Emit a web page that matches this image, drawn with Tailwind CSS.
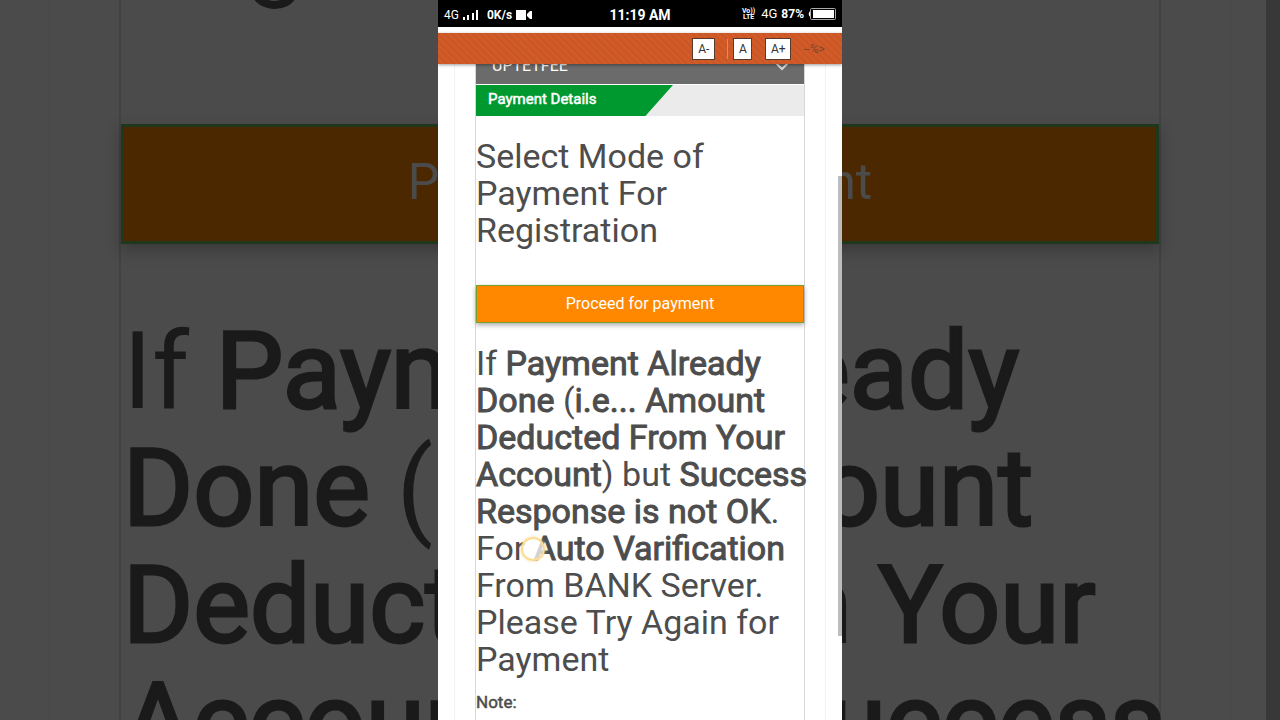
<!DOCTYPE html>
<html lang="en">
<head>
    <meta charset="UTF-8">
    <meta name="viewport" content="width=device-width, initial-scale=1.0">
    <title>Payment Details</title>
    <script src="https://cdn.jsdelivr.net/npm/@tailwindcss/browser@4"></script>
</head>
<body class="h-screen overflow-hidden bg-[#4b4b4b] font-[Roboto,sans-serif]">
    <div class="relative h-full overflow-hidden flex justify-center">

        <!-- Dimmed enlarged page behind the phone -->
        <div aria-hidden="true" class="absolute inset-0 overflow-hidden flex text-[#1a1a1a] text-[107px] leading-[117px]">
            <div class="w-12 shrink-0"></div>
            <div class="flex-1 min-w-0 border-x-2 border-[#494949] px-[69px] h-full">
                <div class="flow-root h-full border-x-2 border-[#424242] whitespace-nowrap">
                    <p class="-mt-[342px] pl-0.5">Select Mode of<br>Payment For<br>Registration</p>
                    <button tabindex="-1" class="mt-[115px] block w-full h-[120px] pb-1 border-[3px] border-[#1f381c] bg-[#4b2800] text-[#4b4b4b] text-[50px] leading-[50px] shadow-[0_6px_14px_rgba(0,0,0,0.25)]">Proceed for payment</button>
                    <p class="mt-[69px] pl-0.5">
                        If <span class="[-webkit-text-stroke:3px_#1a1a1a]">Payment Already</span><br>
                        <span class="[-webkit-text-stroke:3px_#1a1a1a]">Done</span> (<span class="[-webkit-text-stroke:3px_#1a1a1a]">i.e... Amount</span><br>
                        <span class="[-webkit-text-stroke:3px_#1a1a1a]">Deducted From Your</span><br>
                        <span class="[-webkit-text-stroke:3px_#1a1a1a]">Account</span>) but <span class="[-webkit-text-stroke:3px_#1a1a1a]">Success</span>
                    </p>
                </div>
            </div>
            <div class="w-[34px] shrink-0"></div>
            <div class="w-[14px] shrink-0 bg-[#383838]"></div>
        </div>

        <!-- Phone screen -->
        <div class="relative w-[404px] h-full overflow-hidden flex flex-col bg-white text-[#4d4d4d]">

            <!-- Status bar -->
            <header class="h-[27px] shrink-0 bg-black text-white grid grid-cols-3 items-center px-1.5 text-[13px] leading-4">
                <div class="flex items-center gap-1 pt-0.5">
                    <span class="text-xs">4G</span>
                    <svg class="w-4 h-3" viewBox="0 0 16 12" fill="#fff">
                        <rect x="0" y="8" width="2" height="3"/>
                        <rect x="4" y="6" width="2" height="5"/>
                        <rect x="9" y="4" width="2" height="7"/>
                        <rect x="13" y="1" width="2" height="10"/>
                    </svg>
                    <span class="pl-1 text-xs font-bold">0K/s</span>
                    <svg class="w-4 h-[10px]" viewBox="0 0 16 10" fill="#fff">
                        <path d="M0 0H10V10H0Z"/>
                        <path d="M11 4L14 1H16V9H14L11 6Z"/>
                    </svg>
                </div>
                <div class="text-center text-sm leading-4 font-bold pt-0.5">11:19 AM</div>
                <div class="flex items-center justify-end gap-1">
                    <span class="text-[7px] leading-[6px] font-bold text-center">Vo))<br>LTE</span>
                    <span class="pl-0.5 text-[13px]">4G</span>
                    <span class="text-xs font-bold">87%</span>
                    <svg class="w-7 h-3" viewBox="0 0 28 12">
                        <path d="M3 3C0 3 0 9 3 9" fill="#fff"/>
                        <rect x="2.500" y="0.500" width="25" height="11" rx="1" fill="none" stroke="#aaa"/>
                        <rect x="5" y="2" width="21" height="8" fill="#fff"/>
                    </svg>
                </div>
            </header>

            <!-- Text size toolbar -->
            <div class="relative z-10 mt-[6px] h-[31px] shrink-0 flex items-center justify-end pr-[17px] text-xs text-[#333] bg-[#d05a28] bg-[repeating-linear-gradient(45deg,#cc5726_0px,#cc5726_2px,#d25c29_3px,#d25c29_5px)] shadow-[0_1px_3px_rgba(0,0,0,0.4)]">
                <button class="h-[22px] w-[23px] border border-[#5a3a2a] bg-white">A-</button>
                <span class="ml-3 mr-[5px] h-5 w-px bg-[#d98a66]"></span>
                <button class="h-[22px] w-[19px] border border-[#5a3a2a] bg-white">A</button>
                <button class="ml-[13px] h-[22px] w-[26px] border border-[#5a3a2a] bg-white">A+</button>
                <span class="ml-3 text-[#7d4630]">--%&gt;</span>
            </div>

            <main class="flex-1 min-h-0 px-4">
                <div class="h-full border-x border-[#f3f3f3] px-5">
                    <div class="h-full border-x border-[#d8d8d8]">
                        <div class="h-5 overflow-hidden bg-[#6b6b6b] text-white flex items-start justify-between px-4">
                            <span class="-mt-2 text-base leading-5">UPTETFEE</span>
                            <svg class="w-3 h-5" viewBox="0 0 12 20" fill="none" stroke="#d5d5d5" stroke-width="2">
                                <path d="M0 -1L6 5L12 -1"/>
                            </svg>
                        </div>
                        <div class="mt-px h-[31px] bg-[#ebebeb]">
                            <h2 class="h-full w-[197px] bg-[#00992f] [clip-path:polygon(0_0,100%_0,86%_100%,0_100%)] pl-3 pt-1 text-[15px] leading-5 text-white [-webkit-text-stroke:0.5px_#fff]">Payment Details</h2>
                        </div>
                        <h1 class="mt-[22px] text-[34px] leading-[37px]">Select Mode of Payment For Registration</h1>
                        <button class="mt-9 block w-full h-[38px] border border-[#76a02c] bg-[#ff8800] text-base text-white shadow-[0_2px_5px_rgba(0,0,0,0.35)]">Proceed for payment</button>
                        <p class="mt-[22px] text-[34px] leading-[37px] whitespace-nowrap">
                            If <span class="[-webkit-text-stroke:1px_#4d4d4d]">Payment Already</span><br>
                            <span class="[-webkit-text-stroke:1px_#4d4d4d]">Done</span> (<span class="[-webkit-text-stroke:1px_#4d4d4d]">i.e... Amount</span><br>
                            <span class="[-webkit-text-stroke:1px_#4d4d4d]">Deducted From Your</span><br>
                            <span class="[-webkit-text-stroke:1px_#4d4d4d]">Account</span>) but <span class="[-webkit-text-stroke:1px_#4d4d4d]">Success</span><br>
                            <span class="[-webkit-text-stroke:1px_#4d4d4d]">Response is not OK</span>.<br>
                            For <span class="[-webkit-text-stroke:1px_#4d4d4d]">Auto Varification</span><br>
                            From BANK Server.<br>
                            Please Try Again for<br>
                            Payment
                        </p>
                        <p class="mt-3 text-[17px] leading-6 [-webkit-text-stroke:0.5px_#4d4d4d]">Note:</p>
                    </div>
                </div>
            </main>

            <!-- Touch point -->
            <span class="absolute left-[83px] top-[537px] size-6 rounded-full border-2 border-[#fbdc90] bg-white/75 shadow-[0_0_3px_#f8d990]"></span>
            <!-- Scroll thumb -->
            <span class="absolute right-0 top-[176px] w-1 h-[460px] bg-[#bdbdbd]"></span>
        </div>
    </div>
</body>
</html>
